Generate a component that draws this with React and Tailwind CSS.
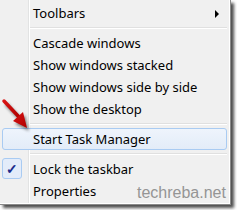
const ITEMS = [
  { label: "Toolbars", submenu: true },
  { sep: true },
  { label: "Cascade windows" },
  { label: "Show windows stacked" },
  { label: "Show windows side by side" },
  { label: "Show the desktop" },
  { sep: true },
  { label: "Start Task Manager", hover: true },
  { sep: true },
  { label: "Lock the taskbar", checked: true },
  { label: "Properties" },
];

function Separator() {
  return (
    <div className="flex h-[8px] flex-col justify-center pl-[30px] pr-[2px]">
      <div className="h-px bg-[#e0e0e0]" />
      <div className="h-px bg-white" />
    </div>
  );
}

function Item({ item }) {
  return (
    <div
      className={`relative mx-[2px] flex h-[22px] items-center rounded-[3px] border pl-[30px] ${
        item.hover
          ? "border-[#a9cbf2] bg-[linear-gradient(#eef4fc,#e3ecf8)]"
          : "border-transparent"
      }`}
    >
      {item.checked && (
        <span className="absolute left-[-1px] top-[-1px] flex h-[21px] w-[20px] items-center justify-center rounded-[3px] border border-[#a9cbf2] bg-[#e3ecfa] text-[14px] font-bold text-[#1d2c8c]">
          ✓
        </span>
      )}
      <span className="text-[13px] leading-none text-black">{item.label}</span>
      {item.submenu && (
        <svg className="absolute left-[212px] top-[7px]" width="5" height="8" viewBox="0 0 5 8">
          <path d="M0 0 L4 4 L0 8 Z" fill="#000" />
        </svg>
      )}
    </div>
  );
}

export default function App() {
  return (
    <div
      className="relative h-[210px] w-[237px] overflow-hidden bg-white"
      style={{ fontFamily: '"Noto Sans", "Open Sans", sans-serif' }}
    >
      <div className="h-[205px] w-[231px] border-b border-r border-[#8a8a8a] shadow-[3px_3px_3px_rgba(0,0,0,0.7)]">
        <div className="h-full border-b border-r border-white bg-[#f0f0f0] bg-[linear-gradient(to_right,#f0f0f0_28px,#e2e3e3_28px,#e2e3e3_29px,#ffffff_29px,#ffffff_30px,#f0f0f0_30px)] pt-[2px]">
          {ITEMS.map((it, i) => (it.sep ? <Separator key={i} /> : <Item key={i} item={it} />))}
        </div>
      </div>

      <svg className="absolute left-0 top-[96px]" width="38" height="42" viewBox="0 0 38 42">
        <defs>
          <filter id="sh" x="-50%" y="-50%" width="200%" height="200%">
            <feGaussianBlur stdDeviation="1.6" />
          </filter>
          <linearGradient id="rd" x1="0" y1="0" x2="1" y2="1">
            <stop offset="0" stopColor="#d81414" />
            <stop offset="1" stopColor="#b00000" />
          </linearGradient>
        </defs>
        <g transform="translate(2,3)" opacity="0.45" filter="url(#sh)">
          <path d="M4 5 L19 21" stroke="#000" strokeWidth="3.5" />
          <path d="M27 32 L13 25 L23 16 Z" fill="#000" />
        </g>
        <path d="M4 5 L19 21" stroke="url(#rd)" strokeWidth="3.5" strokeLinecap="round" />
        <path d="M27 32 L13 25 L23 16 Z" fill="url(#rd)" />
      </svg>

      <span
        className="absolute left-[137px] top-[185px] text-[16px] leading-none text-[#959595]"
        style={{ fontFamily: '"Liberation Sans", Arial, sans-serif' }}
      >
        techreba.net
      </span>
    </div>
  );
}
